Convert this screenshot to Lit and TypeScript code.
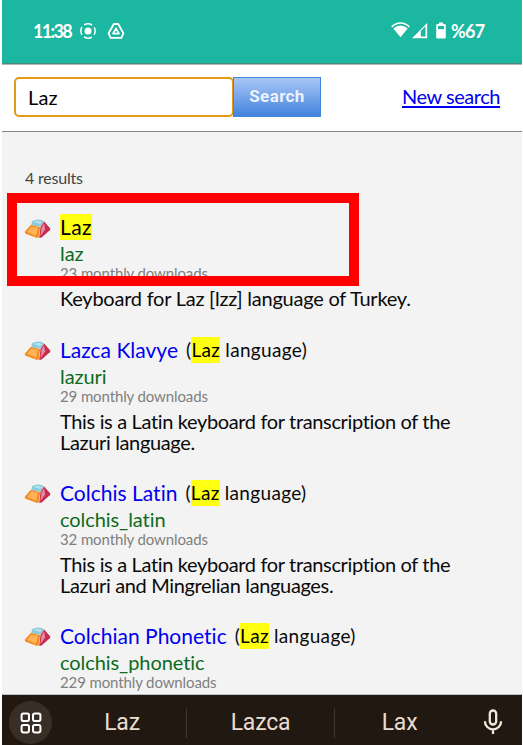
import { LitElement, html, css, svg } from "lit";
import { customElement, property } from "lit/decorators.js";

interface Keyboard {
  name: string;
  id: string;
  downloads: number;
  matched: boolean;
  description: string;
}

const KEYBOARDS: Keyboard[] = [
  { name: "Laz", id: "laz", downloads: 23, matched: true, description: "Keyboard for Laz [lzz] language of Turkey." },
  { name: "Lazca Klavye", id: "lazuri", downloads: 29, matched: false, description: "This is a Latin keyboard for transcription of the\nLazuri language." },
  { name: "Colchis Latin", id: "colchis_latin", downloads: 32, matched: false, description: "This is a Latin keyboard for transcription of the\nLazuri and Mingrelian languages." },
  { name: "Colchian Phonetic", id: "colchis_phonetic", downloads: 229, matched: false, description: "" },
];

@customElement("status-bar")
export class StatusBar extends LitElement {
  static styles = css`
    :host { display: flex; align-items: center; height: 64px; box-sizing: border-box; padding: 0 36px 2px 31px; background: #1bb7a0; border-bottom: 1px solid #4b8a80; color: #fff; font: 700 18px/22px Lato, sans-serif; }
    svg { display: block; flex: none; }
    .time { width: 39px; letter-spacing: -1.7px; white-space: nowrap; }
    .cast { margin-left: 7px; }
    .drive { margin-left: 10px; }
    .space { flex: 1; }
    .battery { margin: 0 5px 0 7px; }
    .percent { width: 35px; letter-spacing: -0.7px; white-space: nowrap; }
  `;
  render() {
    return html`
      <span class="time">11:38</span>
      <svg class="cast" width="18" height="18" viewBox="0 0 18 18"><circle cx="9" cy="9" r="3.5" fill="#fff"/><circle cx="9" cy="9" r="7.2" fill="none" stroke="#fff" stroke-width="1.5" stroke-dasharray="8.3 3.01" stroke-dashoffset="4.15"/></svg>
      <svg class="drive" width="18" height="18" viewBox="0 0 18 18"><path d="M6.8 2h4.4l5.2 9.3-2 4.6H3.6l-2-4.6z" fill="none" stroke="#fff" stroke-width="1.8" stroke-linejoin="round"/><path d="M9 6.3l3 5.3H6z" fill="none" stroke="#fff" stroke-width="1.7" stroke-linejoin="round"/></svg>
      <span class="space"></span>
      <svg width="19" height="17" viewBox="0 0 19 17"><path d="M.7 4.8C6-.2 13-.2 18.3 4.8" fill="none" stroke="#fff" stroke-width="1.6"/><path d="M2.3 6.4Q9.5.6 16.7 6.4L9.5 15.3z" fill="#fff"/></svg>
      <svg width="19" height="17" viewBox="0 0 19 17"><path d="M2 16.3L17.2 1v15.3z" fill="#fff"/><path d="M10.8 9l4.7-4.7v10.3h-4.7z" fill="#1bb7a0"/></svg>
      <svg class="battery" width="10" height="17" viewBox="0 0 10 17"><path d="M3 .4h4v1.5h1.5A1.3 1.3 0 0 1 9.8 3.2v12a1.3 1.3 0 0 1-1.3 1.3h-7A1.3 1.3 0 0 1 .2 15.2v-12a1.3 1.3 0 0 1 1.3-1.3H3z" fill="#fff"/><path d="M2 4h6v3.2H2z" fill="#1bb7a0"/></svg>
      <span class="percent">%67</span>
    `;
  }
}

@customElement("search-bar")
export class SearchBar extends LitElement {
  static styles = css`
    :host { display: flex; align-items: flex-start; box-sizing: border-box; height: 68px; padding: 12px 22px 0 12px; background: #fff; border-top: 1px solid #b5b5b5; border-bottom: 1px solid #858585; }
    .field { box-sizing: border-box; width: 220px; height: 40px; border: 2px solid #e39b17; border-radius: 5px; padding-left: 12px; font: 20px/36px Lato, sans-serif; letter-spacing: 0.2px; color: #000; }
    .button { box-sizing: border-box; width: 88px; height: 40px; margin-left: -1px; border: 1px solid #4285dc; background: linear-gradient(#a8c6f5, #4384dd); color: #ecf2fe; text-align: center; font: 700 17px/37px Roboto, sans-serif; letter-spacing: 0.4px; }
    .again { margin-left: auto; width: 98px; white-space: nowrap; font: 20px/39px Lato, sans-serif; letter-spacing: -0.45px; color: #0000ee; text-decoration: underline; text-decoration-thickness: 2px; text-underline-offset: 2px; }
  `;
  render() {
    return html`<div class="field">Laz</div><div class="button">Search</div><a class="again">New search</a>`;
  }
}

@customElement("keyboard-result")
export class KeyboardResult extends LitElement {
  @property({ attribute: false }) item!: Keyboard;
  static styles = css`
    :host { display: flex; font-family: Lato, sans-serif; color: #0a0a0a; padding-bottom: 27.5px; white-space: nowrap; }
    .icon { flex: none; margin: 4.5px 9px 0 0; }
    .title { display: flex; height: 26px; line-height: 26px; margin-bottom: 2px; }
    .name { font-size: 21px; letter-spacing: 0.01px; color: #0000ee; }
    .name mark { letter-spacing: 0.4px; }
    .lang { font-size: 19px; letter-spacing: 0.32px; margin-left: 8px; }
    mark { display: inline-block; background: #ffff12; color: #000; }
    .id { font-size: 20px; line-height: 22px; letter-spacing: -0.07px; color: #0b6b20; }
    .count { font-size: 15px; line-height: 18px; letter-spacing: -0.12px; color: #7f7f7f; margin-bottom: 6.5px; }
    .description { font-size: 20px; line-height: 20.5px; letter-spacing: -0.35px; white-space: pre; }
    .single { letter-spacing: -0.24px; margin-top: -0.5px; margin-bottom: 0.5px; }
  `;
  render() {
    const k = this.item;
    return html`
      <svg class="icon" width="27" height="20" viewBox="0 0 27 20">
        <path d="M8 2.6Q8.5 1.5 10 1.3L14 .6Q18 .3 20 2.4L16.8 7.6 7.2 6.4z" fill="#8dcbda"/>
        <path d="M9.3 2.8l5-1 4 1.1-2.5 2.2z" fill="#b9e2eb"/>
        <path d="M6.6 6.1l9.6 1.8-1.6 10.4-1.4.8L1.6 14.8Q.3 14 1 12.6z" fill="#f58a22"/>
        <path d="M7.4 7.5l6.6 1.2-2 8-9-3.6z" fill="#ffb257"/>
        <path d="M20.2 2.5L26 9.2q.6 1-.2 2L17.6 18.4l-2.4.6 1.3-11z" fill="#c92c50"/>
        <path d="M20 4.2l1.2 6-4.8 7 1.2-8.8z" fill="#e58a9f"/>
      </svg>
      <div>
        <div class="title">
          <span class="name">${k.matched ? html`<mark>${k.name}</mark>` : k.name}</span>
          ${k.matched ? "" : html`<span class="lang">(<mark>Laz</mark> language)</span>`}
        </div>
        <div class="id">${k.id}</div>
        <div class="count">${k.downloads} monthly downloads</div>
        ${k.description ? html`<div class="description ${k.matched ? "single" : ""}">${k.description}</div>` : ""}
      </div>
    `;
  }
}

@customElement("suggestion-strip")
export class SuggestionStrip extends LitElement {
  static styles = css`
    :host { display: grid; grid-template-columns: 56px 128px 1px 147px 1px 129px 58px; align-items: center; height: 50px; background: #211811; color: #eaddd0; font: 23px/28px Roboto, sans-serif; text-align: center; }
    .apps { display: flex; align-items: center; justify-content: center; box-sizing: border-box; width: 43px; height: 43px; margin: 5px 0 0 7px; border-radius: 50%; background: #382e26; }
    .word { padding-top: 5px; letter-spacing: -0.2px; }
    .rule { height: 30px; background: #40372f; margin-top: 6px; }
    .mic { margin: 4px 0 0 19px; }
  `;
  render() {
    return html`
      <div class="apps"><svg width="22" height="22" viewBox="0 0 22 22" fill="none" stroke="#fff" stroke-width="2">${[[1.6, 1.6], [13, 1.6], [1.6, 13], [13, 13]].map(([x, y]) => svg`<rect x=${x} y=${y} width="7.4" height="7.4" rx="1.8"/>`)}</svg></div>
      <span class="word">Laz</span><span class="rule"></span>
      <span class="word">Lazca</span><span class="rule"></span>
      <span class="word">Lax</span>
      <svg class="mic" width="20" height="26" viewBox="0 0 20 26" fill="none" stroke="#f4e6d9" stroke-width="2.3"><rect x="6.8" y="1.5" width="6.4" height="14" rx="3.2"/><path d="M1.9 12.3a8.1 8.1 0 0 0 16.2 0M10 20.4V25"/></svg>
    `;
  }
}

@customElement("app-root")
export class AppRoot extends LitElement {
  static styles = css`
    :host { display: grid; grid-template-rows: 64px 68px 563px 50px; position: relative; box-sizing: border-box; width: 523px; height: 745px; padding: 0 1px 0 2px; background: #fff; overflow: hidden; }
    .results { box-sizing: border-box; background: #f3f3f3; border-bottom: 1px solid #bdbdbd; padding: 36px 0 0 22px; overflow: hidden; }
    .total { font: 16px/20px Lato, sans-serif; letter-spacing: -0.2px; color: #444; padding-left: 1px; margin-bottom: 26px; }
    .focus { position: absolute; left: 7px; top: 193px; box-sizing: border-box; width: 352px; height: 93px; border: 10px solid #f00; }
  `;
  render() {
    return html`
      <status-bar></status-bar>
      <search-bar></search-bar>
      <div class="results">
        <div class="total">4 results</div>
        ${KEYBOARDS.map((k) => html`<keyboard-result .item=${k}></keyboard-result>`)}
      </div>
      <suggestion-strip></suggestion-strip>
      <div class="focus"></div>
    `;
  }
}
